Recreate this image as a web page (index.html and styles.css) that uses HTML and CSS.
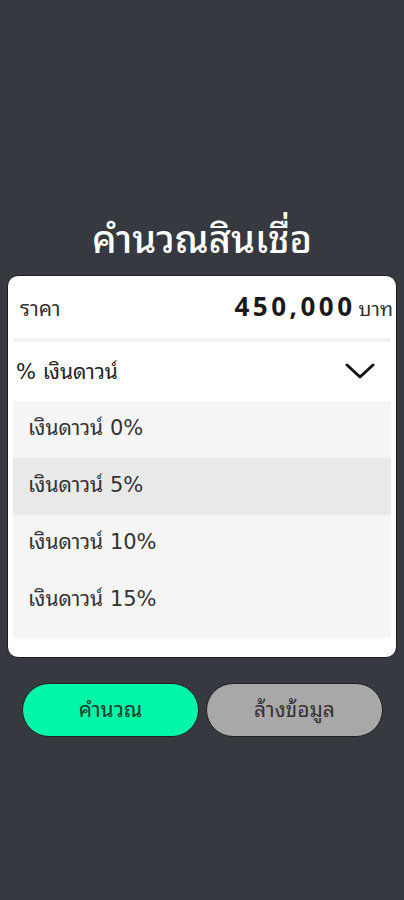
FILE: index.html
```html
<!DOCTYPE html>
<html lang="th">
<head>
<meta charset="utf-8">
<title>คำนวณสินเชื่อ</title>
<link rel="stylesheet" href="styles.css">
</head>
<body>
<main class="screen">
  <h1 class="title">คำนวณสินเชื่อ</h1>
  <section class="card">
    <div class="price-row">
      <span class="price-label">ราคา</span>
      <span class="price-value"><span class="amount">450,000</span><span class="unit">บาท</span></span>
    </div>
    <div class="divider"></div>
    <div class="select-head">
      <span class="select-label">% เงินดาวน์</span>
      <svg class="chevron" width="30" height="17" viewBox="0 0 30 17"><path d="M2 2 L15 14 L28 2" fill="none" stroke="#111" stroke-width="3" stroke-linecap="round" stroke-linejoin="round"/></svg>
    </div>
    <ul class="options">
      <li class="option">เงินดาวน์ 0%</li>
      <li class="option option-active">เงินดาวน์ 5%</li>
      <li class="option">เงินดาวน์ 10%</li>
      <li class="option">เงินดาวน์ 15%</li>
    </ul>
  </section>
  <div class="actions">
    <button class="btn btn-calc">คำนวณ</button>
    <button class="btn btn-clear">ล้างข้อมูล</button>
  </div>
</main>
</body>
</html>
```
FILE: styles.css
```css
* { box-sizing: border-box; }
html, body {
  margin: 0;
  padding: 0;
  background: #363a40;
}
body {
  font-family: "DejaVu Sans", "Noto Sans Thai Looped", "Noto Serif Thai", "Loma", "Garuda", "Noto Sans Thai", sans-serif;
  color: #222;
}
.screen {
  width: 404px;
  height: 900px;
  padding: 215px 7px 0 7px;
  display: flex;
  flex-direction: column;
}
.title {
  margin: 0;
  height: 50px;
  line-height: 50px;
  font-size: 38px;
  font-weight: 500;
  color: #ffffff;
  text-align: center;
}
.card {
  margin-top: 10px;
  background: #ffffff;
  border: 1px solid #1c1c1c;
  border-radius: 11px;
  height: 383px;
  display: flex;
  flex-direction: column;
  overflow: hidden;
}
.price-row {
  height: 62px;
  display: flex;
  align-items: center;
  justify-content: space-between;
  padding: 0 3px 2px 12px;
}
.price-label {
  font-size: 21px;
  color: #333;
}
.price-value {
  display: flex;
  align-items: baseline;
}
.amount {
  font-family: "Noto Sans", sans-serif;
  font-size: 26px;
  font-weight: 700;
  letter-spacing: 3.5px;
  color: #1a1a1a;
  margin-right: 3px;
}
.unit {
  font-size: 20px;
  color: #333;
}
.divider {
  height: 4px;
  margin: 0 5px;
  background: #f1f1f1;
}
.select-head {
  height: 59px;
  display: flex;
  align-items: center;
  justify-content: space-between;
  padding: 0 21px 4px 8px;
}
.select-label {
  font-size: 21px;
  color: #222;
}
.chevron { display: block; margin-top: 4px; }
.options {
  list-style: none;
  margin: 0 5px;
  padding: 0 0 9px 0;
  background: #f5f5f5;
}
.option {
  height: 57px;
  display: flex;
  align-items: center;
  padding: 0 0 8px 15px;
  font-size: 21px;
  color: #333;
}
.option-active {
  background: #e9e9e9;
}
.actions {
  margin-top: 25px;
  display: flex;
  gap: 7px;
  padding: 0 14px 0 15px;
}
.btn {
  flex: 1;
  height: 54px;
  padding: 0 0 5px 0;
  border-radius: 27px;
  border: 1px solid #1e1e1e;
  font-family: "DejaVu Sans", "Noto Sans Thai Looped", "Noto Serif Thai", "Loma", "Garuda", "Noto Sans Thai", sans-serif;
  font-size: 21px;
  cursor: pointer;
}
.btn-calc {
  background: #00f7a8;
  color: #1d3a2e;
}
.btn-clear {
  background: #a8a8a8;
  color: #333;
}
```
